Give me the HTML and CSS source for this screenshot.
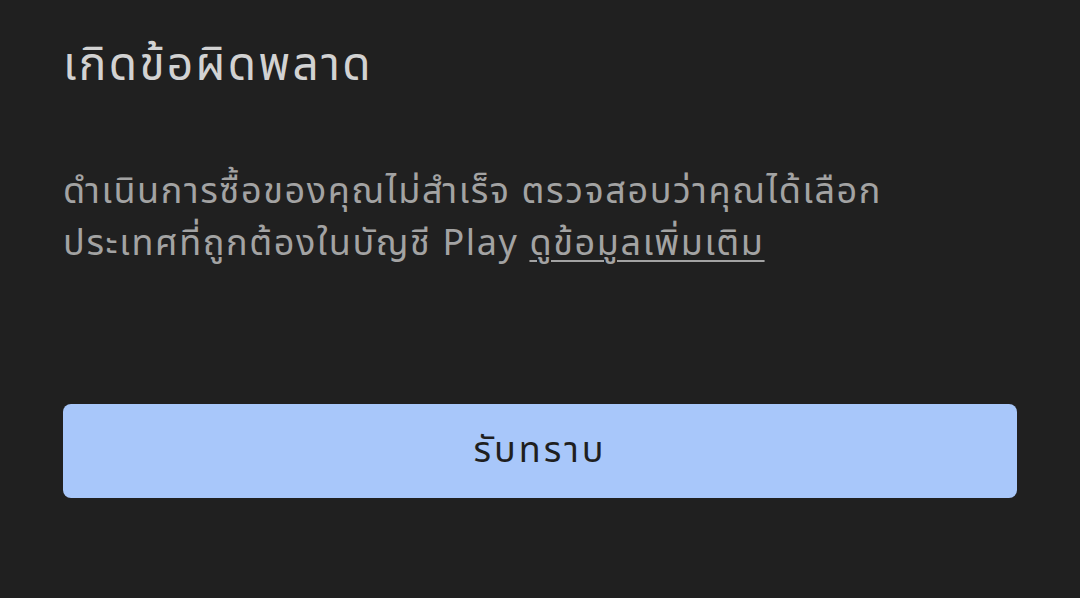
FILE: index.html
```html
<!DOCTYPE html>
<html lang="th">

<head>
    <meta charset="UTF-8">
    <meta name="viewport" content="width=device-width, initial-scale=1.0">
    <title>เกิดข้อผิดพลาด</title>
    <link rel="stylesheet" href="styles.css">
</head>

<body>

    <div class="dialog">
        <h1 class="dialog-title">เกิดข้อผิดพลาด</h1>

        <p class="dialog-body">
            ดำเนินการซื้อของคุณไม่สำเร็จ ตรวจสอบว่าคุณได้เลือก<br>
            ประเทศที่ถูกต้องในบัญชี Play <a href="#">ดูข้อมูลเพิ่มเติม</a>
        </p>

        <button class="dialog-button" type="button">รับทราบ</button>
    </div>

</body>

</html>
```

FILE: styles.css
```css
* {
    margin: 0;
    padding: 0;
    box-sizing: border-box;
}

body {
    font-family: 'Noto Sans', 'Noto Sans Thai', 'Roboto', sans-serif;
    background-color: #202020;
    color: #a3a3a3;
    width: 1080px;
    height: 598px;
    overflow: hidden;
}

.dialog {
    display: flex;
    flex-direction: column;
    align-items: flex-start;
    padding: 30px 63px 0 63px;
}

.dialog-title {
    font-size: 46px;
    font-weight: 400;
    letter-spacing: 2.3px;
    color: #d2d2d2;
    line-height: 64px;
}

.dialog-body {
    margin-top: 70px;
    font-size: 36px;
    letter-spacing: 1.6px;
    line-height: 52px;
    color: #a3a3a3;
}

.dialog-body a {
    color: #a3a3a3;
    text-decoration: underline;
    text-decoration-thickness: 2px;
    text-underline-offset: 5px;
}

.dialog-button {
    margin-top: 136px;
    width: 954px;
    height: 94px;
    border: none;
    border-radius: 8px;
    background-color: #a8c7fa;
    color: #1f1f1f;
    font-family: inherit;
    font-size: 36px;
    letter-spacing: 3px;
    cursor: pointer;
}
```
